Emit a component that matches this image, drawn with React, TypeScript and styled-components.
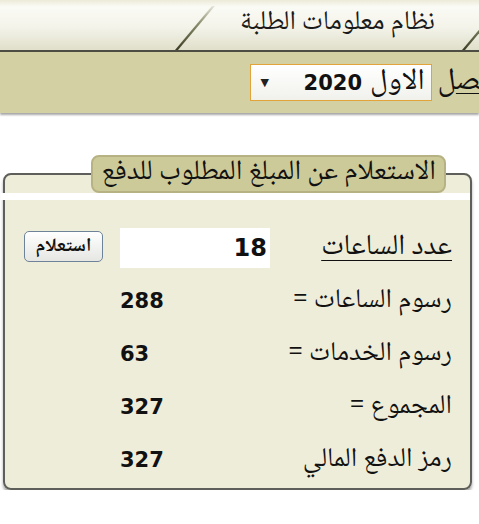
import styled, {createGlobalStyle} from "styled-components";

const GlobalStyle = createGlobalStyle`
    html, body {
        margin: 0;
        padding: 0;
        background: #fff;
    }
    body {
        font-family: "Noto Naskh Arabic", "Noto Sans Arabic", "DejaVu Sans", sans-serif;
        color: #111;
    }
`;

const Page = styled.div`
    direction: rtl;
    width: 479px;
    overflow: hidden;
`;

const Header = styled.div`
    height: 50px;
    display: flex;
    align-items: flex-end;
    background: linear-gradient(#ecebd8 0%, #fbfbf6 14%, #f3f3ea 55%, #e0dfca 100%);
    border-bottom: 2px solid #4d4d43;
`;

const Tab = styled.div`
    position: relative;
    width: 290px;
    height: 42px;
    margin-right: 14px;
    box-sizing: border-box;
    padding-right: 30px;
    display: flex;
    align-items: flex-start;
    font-size: 27px;
    line-height: 30px;
    color: #1a1a1a;

    &::before, &::after {
        content: "";
        position: absolute;
        bottom: 0;
        width: 3px;
        height: 44px;
        transform-origin: bottom;
        transform: skewX(-40deg);
        background: linear-gradient(to top, #3c3e24, #8a8c6c 60%, #e6e6da);
    }
    &::before { left: 0; }
    &::after { right: 0; }
`;

const Toolbar = styled.div`
    height: 61px;
    display: flex;
    align-items: center;
    gap: 6px;
    background: #d3d0a4;
    box-shadow: 0 2px 2px rgba(0, 0, 0, 0.35);
`;

const FieldLabel = styled.span`
    font-size: 31px;
    line-height: 32px;
    margin-right: -27px;
    white-space: nowrap;

    u {
        text-underline-offset: 4px;
        text-decoration-thickness: 1px;
    }
`;

const SelectBox = styled.div`
    width: 182px;
    height: 37px;
    box-sizing: border-box;
    border: 1px solid #e2a43a;
    background: linear-gradient(#ffffff, #f1f1ec);
    display: flex;
    align-items: center;
    padding: 0 6px 0 10px;
    font-size: 30px;
    line-height: 30px;
`;

const SelectText = styled.span`
    flex: 1;
    display: flex;
    gap: 8px;
    align-items: center;

    b {
        font-family: "DejaVu Sans", "Liberation Sans", sans-serif;
        font-weight: 700;
        font-size: 21px;
    }
`;

const Arrow = styled.span`
    font-family: "DejaVu Sans", sans-serif;
    font-size: 11px;
    color: #222;
`;

const Panel = styled.fieldset`
    margin: 42px 7px 0 3px;
    padding: 0;
    border: 2px solid #5e5e5a;
    border-radius: 8px;
    background: #eeedda;
    box-shadow: 0 3px 3px rgba(0, 0, 0, 0.35);
    min-width: 0;
`;

const Legend = styled.legend`
    margin-right: 24px;
    height: 38px;
    box-sizing: border-box;
    padding: 1px 8px 0 9px;
    background: #cdca99;
    border: 2px solid #b6b283;
    border-radius: 8px;
    font-size: 28px;
    line-height: 31px;
    color: #111;
`;

const Seam = styled.div`
    height: 7px;
    margin-left: -4px;
    background: #fff;
`;

const Grid = styled.div`
    display: grid;
    grid-template-columns: 160px 150px 1fr;
    grid-auto-rows: 40px;
    column-gap: 22px;
    row-gap: 13px;
    align-items: center;
    padding: 28px 18px 8px 0;
`;

const Label = styled.span<{ $underline?: boolean }>`
    font-size: ${p => (p.$underline ? 29 : 27)}px;
    line-height: 32px;
    white-space: nowrap;
    text-decoration: ${p => (p.$underline ? "underline" : "none")};
    text-underline-offset: 6px;
    text-decoration-thickness: 1px;
`;

const Value = styled.span`
    justify-self: end;
    font-family: "DejaVu Sans", "Liberation Sans", sans-serif;
    font-weight: 700;
    font-size: 21px;
`;

const Input = styled.input`
    width: 150px;
    height: 40px;
    box-sizing: border-box;
    border: none;
    outline: none;
    background: #fff;
    padding: 0 3px;
    text-align: right;
    direction: ltr;
    font-family: "DejaVu Sans", "Liberation Sans", sans-serif;
    font-weight: 700;
    font-size: 24px;
    color: #111;
`;

const Button = styled.button`
    justify-self: start;
    align-self: start;
    margin: 3px -5px 0 0;
    width: 79px;
    height: 31px;
    border: 1.5px solid #6e839a;
    border-radius: 5px;
    background: linear-gradient(#ffffff, #e6e6e3);
    font-family: inherit;
    font-weight: 700;
    font-size: 19px;
    line-height: 20px;
    color: #111;
    padding: 0;
`;

const rows = [
    {label: "رسوم الساعات =", value: "288"},
    {label: "رسوم الخدمات =", value: "63"},
    {label: "المجموع =", value: "327"},
    {label: "رمز الدفع المالي", value: "327"},
];

function App() {
    return (
        <Page>
            <GlobalStyle/>
            <Header>
                <Tab>نظام معلومات الطلبة</Tab>
            </Header>
            <Toolbar>
                <FieldLabel>الف<u>ص</u>ل</FieldLabel>
                <SelectBox>
                    <SelectText>الاول <b>2020</b></SelectText>
                    <Arrow>▼</Arrow>
                </SelectBox>
            </Toolbar>
            <Panel>
                <Legend>الاستعلام عن المبلغ المطلوب للدفع</Legend>
                <Seam/>
                <Grid>
                    <Label $underline>عدد الساعات</Label>
                    <Input defaultValue="18"/>
                    <Button>استعلام</Button>
                    {rows.map(r => (
                        <>
                            <Label key={r.label}>{r.label}</Label>
                            <Value>{r.value}</Value>
                            <span/>
                        </>
                    ))}
                </Grid>
            </Panel>
        </Page>
    );
}

export default App;
